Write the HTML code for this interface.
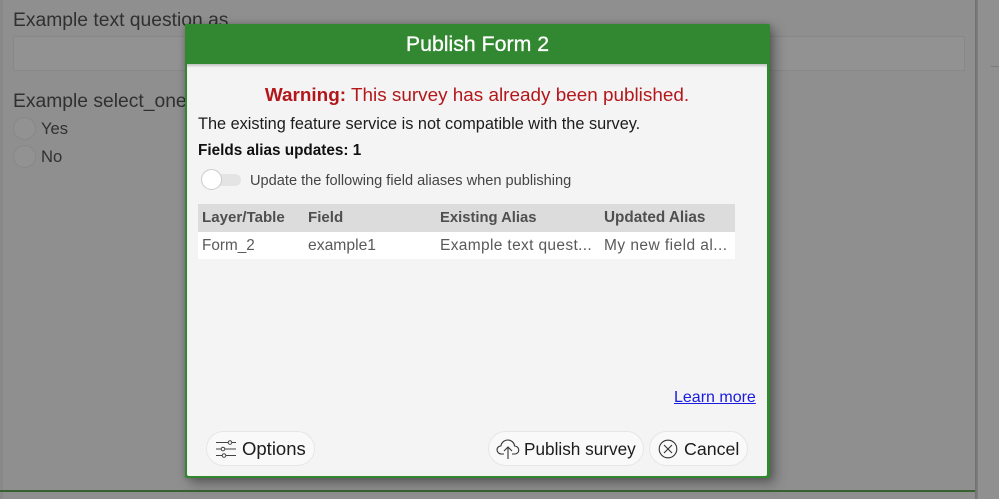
<!DOCTYPE html>
<html><head><meta charset="utf-8"><style>
html,body{margin:0;padding:0}
body{width:999px;height:499px;overflow:hidden;position:relative;background:#8f8f8f;font-family:"Liberation Sans",sans-serif}
.t{position:absolute;white-space:nowrap;line-height:20px}
.a{position:absolute}
.btn{position:absolute;top:431px;height:35px;box-sizing:border-box;background:#f9f9f9;border:1px solid #e6e6e6;border-radius:18px}
</style></head><body>
<div class="a" style="left:0;top:0;width:3px;height:499px;background:#888"></div>
<div class="a" style="left:975px;top:0;width:3px;height:499px;background:linear-gradient(90deg,#6f6f6f,#808080)"></div>
<div class="a" style="left:978px;top:0;width:21px;height:499px;background:#909090"></div>
<div class="a" style="left:991px;top:66px;width:8px;height:1px;background:#7c7c7c"></div>
<div class="a" style="left:0;top:490px;width:975px;height:2px;background:#37622f"></div>

<div class="t" style="left:13px;top:11px;font-size:19.3px;color:#303030">Example text question as</div>
<div class="a" style="left:13px;top:36px;width:952px;height:35px;box-sizing:border-box;border:1px solid #888;border-radius:2px;background:#929292"></div>
<div class="t" style="left:13px;top:92px;font-size:19.3px;color:#303030">Example select_one</div>
<div class="a" style="left:13px;top:117px;width:23px;height:23px;box-sizing:border-box;border:1px solid #888;border-radius:50%;background:#929292"></div>
<div class="a" style="left:13px;top:145px;width:23px;height:23px;box-sizing:border-box;border:1px solid #888;border-radius:50%;background:#929292"></div>
<div class="t" style="left:41px;top:119px;font-size:16.6px;color:#303030">Yes</div>
<div class="t" style="left:41px;top:147px;font-size:16.6px;color:#303030">No</div>

<div class="a" style="left:185px;top:24px;width:585px;height:454px;background:#328830;border-radius:2px;box-shadow:5px 5px 12px rgba(0,0,0,.35),0 0 6px rgba(0,0,0,.2)"></div>
<div class="a" style="left:187px;top:64px;width:580px;height:412px;background:#f4f4f4;border-radius:0 0 2px 2px;box-shadow:inset 0 3px 2px -1px #c4c4c4"></div>
<div class="t" style="left:185px;top:34px;width:585px;text-align:center;font-size:21.3px;color:#fff;-webkit-text-stroke:.3px #fff">Publish Form 2</div>

<div class="t" style="left:187px;top:86px;width:580px;text-align:center;font-size:18.9px;color:#b3171b"><b>Warning:</b> This survey has already been published.</div>
<div class="t" style="left:198px;top:114px;font-size:16.3px;color:#1c1c1c">The existing feature service is not compatible with the survey.</div>
<div class="t" style="left:198px;top:141px;font-size:15.3px;color:#111;font-weight:700">Fields alias updates: 1</div>

<div class="a" style="left:203px;top:174px;width:38px;height:12px;border-radius:6px;background:#e4e4e4"></div>
<div class="a" style="left:201px;top:169px;width:21px;height:21px;box-sizing:border-box;border:1px solid #ccc;border-radius:50%;background:#fff"></div>
<div class="t" style="left:250px;top:171px;font-size:14.6px;color:#444">Update the following field aliases when publishing</div>

<div class="a" style="left:198px;top:204px;width:537px;height:28px;background:#dcdcdc"></div>
<div class="a" style="left:198px;top:232px;width:537px;height:27px;background:#fff"></div>
<div class="t" style="left:202px;top:208px;font-size:15.1px;font-weight:700;color:#4f4f4f">Layer/Table</div>
<div class="t" style="left:308px;top:208px;font-size:15.1px;font-weight:700;color:#4f4f4f">Field</div>
<div class="t" style="left:440px;top:208px;font-size:14.8px;font-weight:700;color:#4f4f4f">Existing Alias</div>
<div class="t" style="left:604px;top:208px;font-size:15.3px;font-weight:700;color:#4f4f4f">Updated Alias</div>
<div class="t" style="left:202px;top:236px;font-size:15.3px;color:#5a5a5a">Form_2</div>
<div class="t" style="left:308px;top:236px;font-size:15.7px;color:#5a5a5a">example1</div>
<div class="t" style="left:440px;top:236px;font-size:15.5px;letter-spacing:.35px;color:#5a5a5a">Example text quest...</div>
<div class="t" style="left:604px;top:236px;font-size:15.5px;letter-spacing:.45px;color:#5a5a5a">My new field al...</div>

<div class="t" style="left:674px;top:388px;font-size:16px;color:#1a1ae0;text-decoration:underline">Learn more</div>

<div class="btn" style="left:206px;width:109px"></div>
<svg class="a" style="left:215px;top:439px" width="22" height="20" viewBox="0 0 22 20" fill="none" stroke="#444" stroke-width="1"><path d="M1 3.500H13M17 3.500H21M1 10H6M10 10H21M1 16.500H7M11 16.500H21"/><circle cx="15" cy="3.500" r="1.800"/><circle cx="8" cy="10" r="1.800"/><circle cx="9" cy="16.500" r="1.800"/></svg>
<div class="t" style="left:242px;top:439px;font-size:18.500px;color:#1c1c1c">Options</div>

<div class="btn" style="left:488px;width:156px"></div>
<svg class="a" style="left:496px;top:438px" width="24" height="22" viewBox="0 0 24 22" fill="none" stroke="#333" stroke-width="1.100"><path d="M8 16H5.500C3 16 1 14.200 1 11.800C1 9.600 2.800 8 4.800 8C5.500 4.500 8.300 2 11.800 2C15.500 2 18.300 4.800 18.600 8C20.800 8 22.800 9.800 22.800 12C22.800 14.300 21 16 18.500 16H16"/><path d="M12 21V9M8 13L12 9L16 13"/></svg>
<div class="t" style="left:524px;top:439px;font-size:17.200px;color:#1c1c1c">Publish survey</div>

<div class="btn" style="left:649px;width:99px"></div>
<svg class="a" style="left:658px;top:439px" width="20" height="20" viewBox="0 0 20 20" fill="none" stroke="#333" stroke-width="1.100"><circle cx="10" cy="10" r="8.800"/><path d="M6 6L14 14M14 6L6 14"/></svg>
<div class="t" style="left:684px;top:439px;font-size:17.800px;color:#1c1c1c">Cancel</div>
</body></html>
